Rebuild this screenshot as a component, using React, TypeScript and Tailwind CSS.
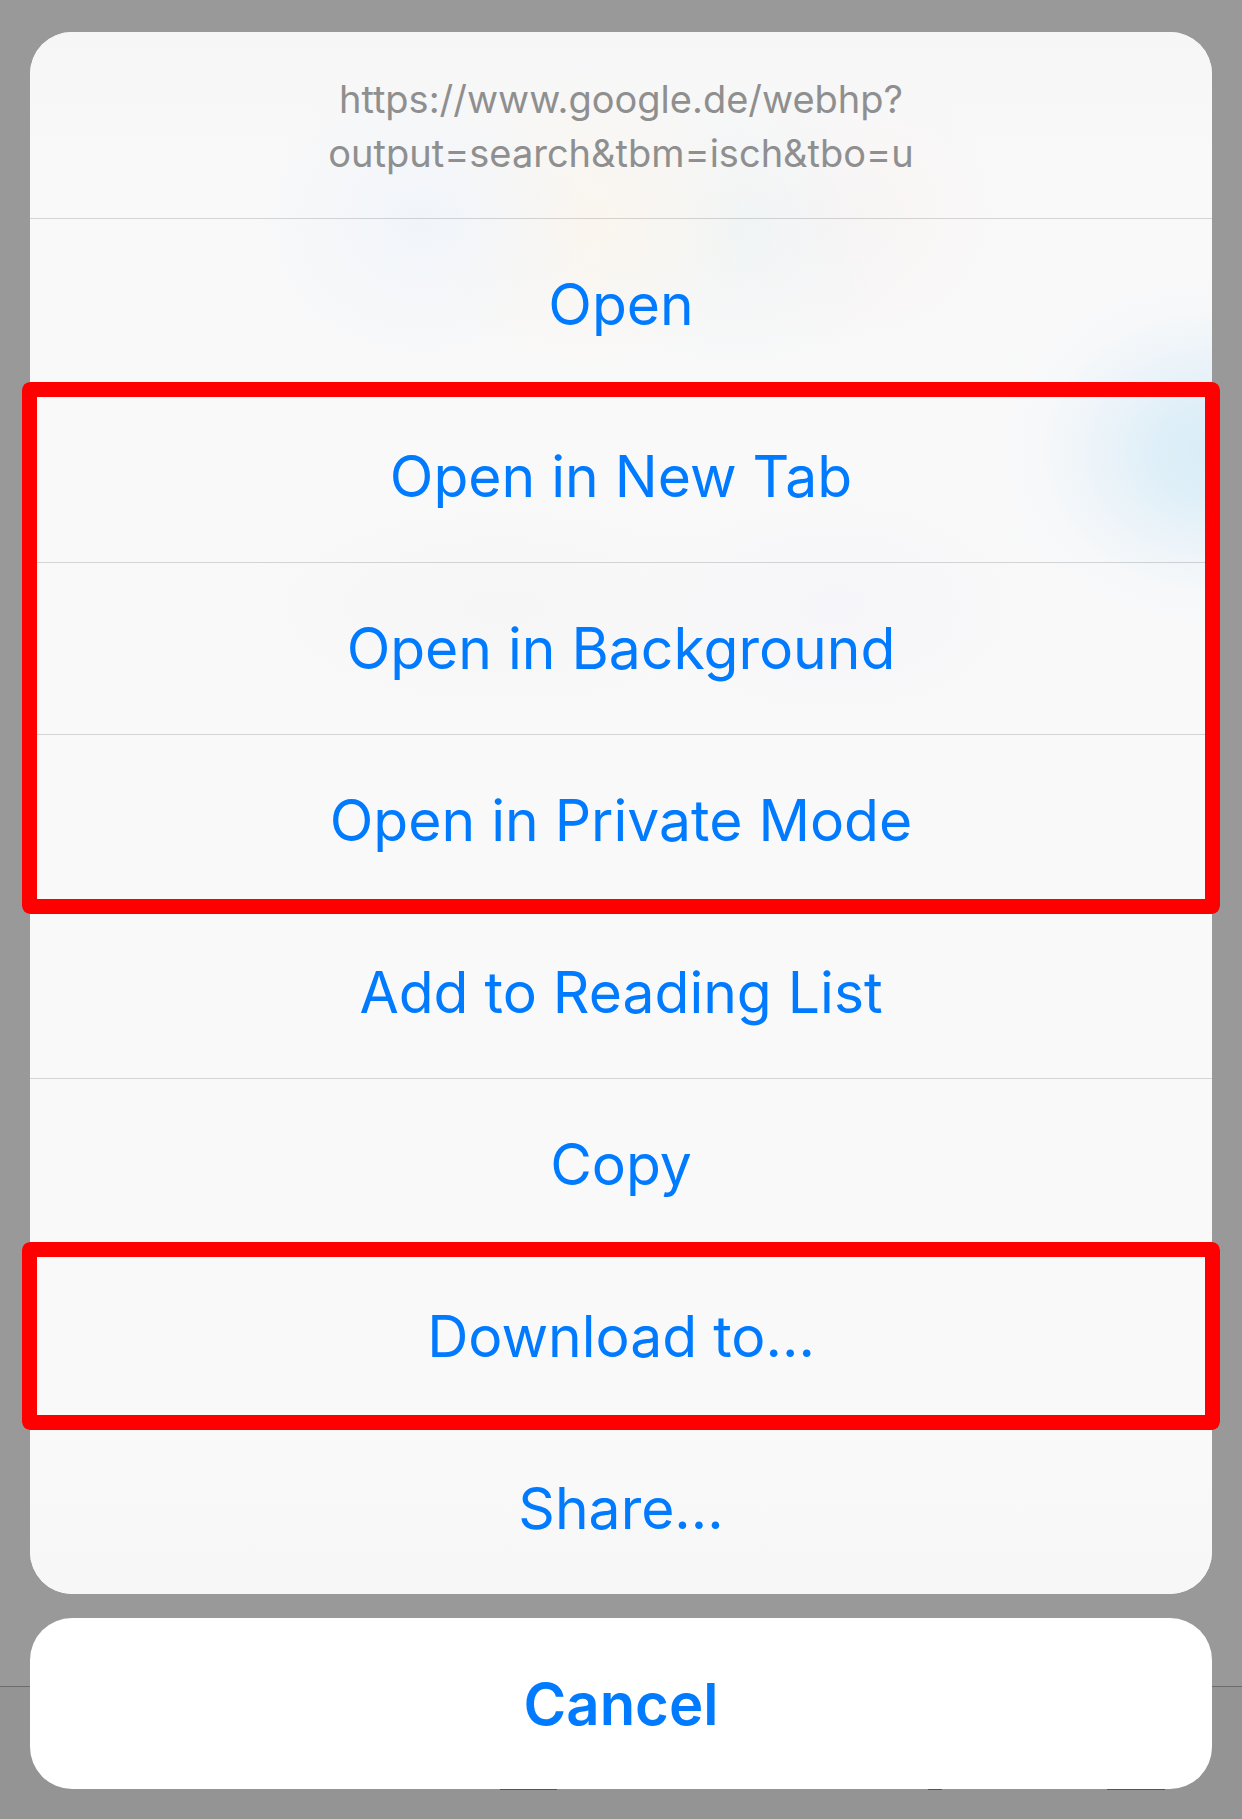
type RowProps = { label: string };

function Row({ label }: RowProps) {
  return (
    <li className="flex h-[172px] border-t border-black/15">
      <button
        type="button"
        className="flex-1 cursor-pointer text-center text-[57px] leading-[72px] text-[#007aff]"
      >
        {label}
      </button>
    </li>
  );
}

function Highlight({ labels }: { labels: string[] }) {
  return (
    <li className="relative">
      <ul>
        {labels.map((label) => (
          <Row key={label} label={label} />
        ))}
      </ul>
      <div className="pointer-events-none absolute -inset-2 rounded-lg bg-[#ff0000] p-[15px] [mask:linear-gradient(#000_0_0)_content-box_exclude,linear-gradient(#000_0_0)]" />
    </li>
  );
}

function Backdrop() {
  return (
    <div aria-hidden="true" className="absolute inset-0 -z-10 flex flex-col justify-end bg-[#999999]">
      <div className="relative h-[133px] border-t border-[#6c6c6c] bg-[#949494]">
        <svg className="absolute bottom-[29px] left-0 h-px w-full" viewBox="0 0 1242 1" preserveAspectRatio="none">
          <path d="M500 .5h57M928 .5h14M1107 .5h58" stroke="#555555" strokeWidth="1" />
        </svg>
      </div>
    </div>
  );
}

function Glow() {
  return (
    <div aria-hidden="true" className="absolute inset-0 -z-10 overflow-hidden rounded-[42px] bg-[#f9f9f9]">
      <div className="absolute inset-0 bg-[radial-gradient(ellipse_230px_190px_at_100%_420px,#d9edf7_0%,#dfeff8_25%,rgba(234,243,249,0.8)_52%,rgba(244,247,250,0.5)_75%,rgba(249,249,249,0)_100%),radial-gradient(ellipse_170px_150px_at_33%_190px,rgba(240,244,250,0.9),rgba(249,249,249,0)),radial-gradient(ellipse_170px_150px_at_47%_190px,rgba(250,245,238,1),rgba(249,249,249,0)),radial-gradient(ellipse_170px_150px_at_60%_200px,rgba(240,244,245,1),rgba(249,249,249,0)),radial-gradient(ellipse_150px_140px_at_70%_180px,rgba(250,244,244,1),rgba(249,249,249,0)),radial-gradient(ellipse_280px_120px_at_40%_575px,rgba(246,246,246,1),rgba(249,249,249,0)),radial-gradient(ellipse_220px_130px_at_68%_575px,rgba(246,246,250,1),rgba(249,249,249,0)),linear-gradient(#f6f6f6,#f9f9f9_130px,#f9f9f9_calc(100%-130px),#f7f7f7)]" />
    </div>
  );
}

export default function App() {
  return (
    <div className="relative isolate min-h-screen px-[30px] pt-8 pb-[30px] font-['Inter',sans-serif]">
      <Backdrop />
      <main className="flex flex-col gap-6">
        <section className="relative isolate" aria-label="Link actions">
          <Glow />
          <p className="h-[186px] pt-10 text-center text-[38px] leading-[54px] text-[#8f8f8f]">
            https://www.google.de/webhp?
            <br />
            output=search&amp;tbm=isch&amp;tbo=u
          </p>
          <ul>
            <Row label="Open" />
            <Highlight labels={["Open in New Tab", "Open in Background", "Open in Private Mode"]} />
            <Row label="Add to Reading List" />
            <Row label="Copy" />
            <Highlight labels={["Download to..."]} />
            <Row label="Share..." />
          </ul>
        </section>
        <button
          type="button"
          className="h-[171px] cursor-pointer rounded-[42px] bg-white text-[58px] leading-[72px] font-semibold text-[#007aff]"
        >
          Cancel
        </button>
      </main>
    </div>
  );
}
